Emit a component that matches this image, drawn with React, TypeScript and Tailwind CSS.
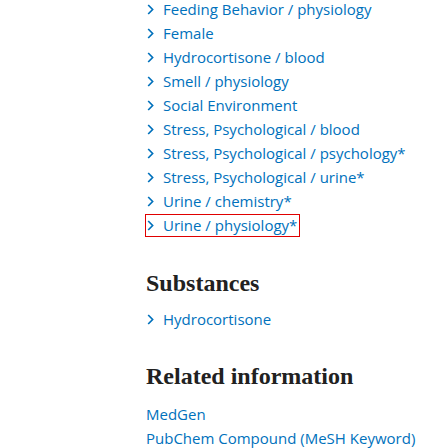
import React from "react";

const terms = [
  "Feeding Behavior / physiology",
  "Female",
  "Hydrocortisone / blood",
  "Smell / physiology",
  "Social Environment",
  "Stress, Psychological / blood",
  "Stress, Psychological / psychology*",
  "Stress, Psychological / urine*",
  "Urine / chemistry*",
  "Urine / physiology*",
];

function Chevron() {
  return (
    <svg width="7" height="11" viewBox="0 0 7 11" className="shrink-0">
      <path d="M1.2 1 L5.6 5.5 L1.2 10" fill="none" stroke="#0071bc" strokeWidth="1.7" />
    </svg>
  );
}

function Item({ text, boxed }: { text: string; boxed?: boolean }) {
  return (
    <li className="h-6 flex items-center">
      <span
        className={
          boxed
            ? "flex items-center gap-[9px] h-[23px] pl-[1px] pr-[2px] border border-[#e00000] -ml-[2px]"
            : "flex items-center gap-[9px]"
        }
      >
        <Chevron />
        <span>{text}</span>
      </span>
    </li>
  );
}

export default function App() {
  return (
    <div
      className="w-[448px] h-[448px] bg-white overflow-hidden pl-[147px] text-[#0071bc] text-[15px]"
      style={{ fontFamily: '"Open Sans", "Noto Sans", sans-serif' }}
    >
      <ul className="-mt-[3px]">
        {terms.map((t, i) => (
          <Item key={t} text={t} boxed={i === terms.length - 1} />
        ))}
      </ul>
      <h2
        className="mt-[32px] text-[24px] leading-[28px] font-bold text-[#212121] -ml-[1px]"
        style={{ fontFamily: '"Liberation Serif", serif' }}
      >
        Substances
      </h2>
      <ul className="mt-[10px]">
        <Item text="Hydrocortisone" />
      </ul>
      <h2
        className="mt-[31px] text-[24px] leading-[28px] font-bold text-[#212121] -ml-[1px]"
        style={{ fontFamily: '"Liberation Serif", serif' }}
      >
        Related information
      </h2>
      <ul className="mt-[12px] -ml-[1px]">
        <li className="h-6 flex items-center">MedGen</li>
        <li className="h-6 flex items-center">PubChem Compound (MeSH Keyword)</li>
      </ul>
    </div>
  );
}
